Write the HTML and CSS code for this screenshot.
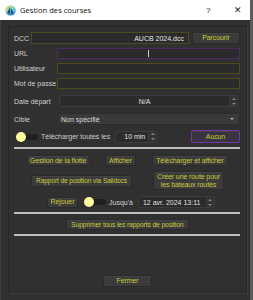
FILE: index.html
```html
<!DOCTYPE HTML><html>
<head>
  <title>Gestion des courses</title>
  <meta name="viewport" content="width=device-width, initial-scale=1">
  <link rel="stylesheet" href="styles.css">
</head>
<body>
<div class="window">
  <div class="titlebar">
    <svg class="appicon" width="11" height="11" viewBox="0 0 11 11">
      <defs>
        <linearGradient id="g" x1="0" y1="0" x2="1" y2="1">
          <stop offset="0" stop-color="#f4e04a"/>
          <stop offset="0.55" stop-color="#6fd0c8"/>
          <stop offset="1" stop-color="#2a9ad8"/>
        </linearGradient>
      </defs>
      <circle cx="5.5" cy="5.5" r="5.3" fill="url(#g)"/>
      <path d="M5 2 L5 8 L2.2 8 Z" fill="#1d3f9a"/>
      <path d="M5.8 3 L8.6 8 L5.8 8 Z" fill="#1d3f9a"/>
      <path d="M2 8.6 L9 8.6 L8 9.6 L3 9.6 Z" fill="#1d3f9a"/>
    </svg>
    <span class="wtitle">Gestion des courses</span>
    <span class="help">?</span>
    <span class="close">&#x2715;</span>
  </div>
  <div class="client">
    <div class="panel">
      <div class="row r-dcc">
        <span class="lbl">DCC</span>
        <div class="field dccfield">AUCB 2024.dcc</div>
        <div class="btn b-parcourir">Parcourir</div>
      </div>
      <div class="row r-url">
        <span class="lbl wide">URL</span>
        <div class="field focus"><span class="caret"></span></div>
      </div>
      <div class="row r-user">
        <span class="lbl wide">Utilisateur</span>
        <div class="field"></div>
      </div>
      <div class="row r-pass">
        <span class="lbl wide">Mot de passe</span>
        <div class="field"></div>
      </div>
      <div class="row r-date">
        <span class="lbl wide">Date départ</span>
        <div class="spin datespin"><span class="spintext center">N/A</span><span class="arrows"><i class="up"></i><i class="dn"></i></span></div>
      </div>
      <div class="row r-cible">
        <span class="lbl wide">Cible</span>
        <div class="combo"><span>Non spécifié</span><i class="drop"></i></div>
      </div>
      <div class="row r-dl">
        <div class="toggle"><span class="knob"></span></div>
        <span class="txt t-dl">Télécharger toutes les</span>
        <div class="spin minspin"><span class="spintext right">10 min</span><span class="arrows"><i class="up"></i><i class="dn"></i></span></div>
        <div class="btn b-aucun">Aucun</div>
      </div>
      <div class="sep s1"></div>
      <div class="row r-b1">
        <div class="btn b-flotte">Gestion de la flotte</div>
        <div class="btn b-afficher">Afficher</div>
        <div class="btn b-telaff">Télécharger et afficher</div>
      </div>
      <div class="row r-b2">
        <div class="btn b-rapport">Rapport de position via Saildocs</div>
        <div class="btn b-route">Créer une route pour<br>les bateaux routés</div>
      </div>
      <div class="row r-b3">
        <div class="btn b-rejouer">Rejouer</div>
        <div class="toggle t2"><span class="knob"></span></div>
        <span class="txt t-jusqu">Jusqu'à</span>
        <div class="spin endspin"><span class="spintext">12 avr. 2024 13:11</span><span class="arrows"><i class="up"></i><i class="dn"></i></span></div>
      </div>
      <div class="sep s2"></div>
      <div class="row r-supp">
        <div class="btn b-supp">Supprimer tous les rapports de position</div>
      </div>
      <div class="sep s3"></div>
      <div class="row r-fermer">
        <div class="btn b-fermer">Fermer</div>
      </div>
    </div>
  </div>
</div>
</body>
</html>
```

FILE: styles.css
```css
html {background: #5b5b5b;}
body {margin: 0; font-family: "Liberation Sans", Arial, sans-serif; font-size: 7px;}
.window {width: 250px; height: 300px; display: flex; flex-direction: column;}

.titlebar {height: 20px; background: #fff; display: flex; align-items: center; padding-left: 5px; box-sizing: border-box;}
.appicon {flex: none;}
.wtitle {font-size: 7.6px; color: #111; margin-left: 4px; flex: 1; font-family: "Open Sans", "Liberation Sans", sans-serif;}
.help {font-size: 8px; color: #222; width: 8px; margin-right: 20px;}
.close {font-size: 9px; color: #222; margin-right: 8px;}

.client {flex: 1; background: #303030; padding: 6px 3px 7px 7px; border-left: 1px solid #3e3e3e; display: flex;}
.panel {flex: 1; border: 1px solid #262626; box-shadow: 1px 1px 0 #3d3d3d; padding: 0 6px 0 5px; display: flex; flex-direction: column;}

.row {display: flex; align-items: center; white-space: nowrap;}
.lbl {color: #cfcfcf; width: 17px; flex: none;}
.lbl.wide {width: 43px;}
.txt {color: #cfcfcf;}

.field {flex: 1; height: 11px; box-sizing: border-box; border: 1px solid #4b4b1f; background: #2b2b2b; color: #e2e2e2; display: flex; align-items: center; padding: 0 4px;}
.dccfield {justify-content: flex-end; height: 12px;}
.field.focus {border-color: #4e2a5e; justify-content: center;}
.caret {width: 1px; height: 7px; background: #cfcfcf;}

.btn {box-sizing: border-box; background: #3b3b3b; border: 1px solid #2a2a2a; border-radius: 2px; color: #caca3c; display: flex; align-items: center; justify-content: center; text-align: center; line-height: 7.5px; box-shadow: inset 0 1px 0 #444; flex: none; letter-spacing: -0.1px;}

.r-dcc {margin-top: 5px;}
.b-parcourir {width: 48px; height: 12px; margin-left: 3px;}
.r-url {margin-top: 4px;}
.r-user {margin-top: 4px;}
.r-pass {margin-top: 4px;}
.r-date {margin-top: 6px;}
.r-cible {margin-top: 6px;}

.spin {box-sizing: border-box; height: 12px; background: #2b2b2b; border: 1px solid #3c3c3c; border-radius: 2px; display: flex; align-items: center; color: #e0e0e0;}
.spintext {flex: 1; padding: 0 4px;}
.spintext.center {text-align: center;}
.spintext.right {text-align: right; padding-right: 3px;}
.arrows {width: 7px; height: 10px; display: flex; flex-direction: column; align-items: center; justify-content: space-around; border-left: 1px solid #3a3a3a; background: #333;}
.arrows i {width: 0; height: 0; border-left: 2px solid transparent; border-right: 2px solid transparent;}
.arrows .up {border-bottom: 2px solid #8a8a8a;}
.arrows .dn {border-top: 2px solid #8a8a8a;}
.datespin {width: 179px; margin-left: 2px;}

.combo {flex: 1; margin-left: 1px; height: 12px; box-sizing: border-box; background: #3a3a3a; border: 1px solid #2c2c2c; border-radius: 2px; color: #dcdcdc; display: flex; align-items: center; padding: 0 3px 0 2px;}
.combo span {flex: 1;}
.drop {width: 0; height: 0; border-left: 2px solid transparent; border-right: 2px solid transparent; border-top: 2px solid #b0b0b0; margin-right: 2px;}

.r-dl {margin-top: 5px; height: 13px;}
.toggle {width: 18px; height: 6px; background: #1f1f1f; border-radius: 3px; position: relative; margin-left: 6px; flex: none;}
.knob {position: absolute; left: -4px; top: -2px; width: 10px; height: 10px; border-radius: 50%; background: #ffff9e;}
.t-dl {margin-left: 3px;}
.minspin {width: 42px; margin-left: 5px;}
.b-aucun {width: 49px; height: 13px; margin-left: auto; background: #393540; border: 1px solid #7636a6;}

.sep {height: 2px; background: #bdbdbd; flex: none;}
.s1 {margin-top: 4px;}

.r-b1 {margin-top: 6px; padding-left: 12px;}
.b-flotte {width: 64px; height: 11px;}
.b-afficher {width: 31px; height: 11px; margin-left: 15px;}
.b-telaff {width: 76px; height: 11px; margin-left: 16px;}

.r-b2 {margin-top: 5px; padding-left: 17px;}
.b-rapport {width: 101px; height: 12px; font-size: 6.6px;}
.b-route {width: 71px; height: 19px; margin-left: 21px; white-space: normal;}

.r-b3 {margin-top: 6px; padding-left: 33px;}
.b-rejouer {width: 31px; height: 11px;}
.t2 {margin-left: 10px;}
.t-jusqu {margin-left: 3px;}
.endspin {width: 77px; margin-left: 5px;}

.s2 {margin-top: 4px;}
.r-supp {margin-top: 5px; padding-left: 52px;}
.b-supp {width: 123px; height: 11px; font-size: 6.7px;}
.s3 {margin-top: 4px;}

.r-fermer {margin-top: auto; margin-bottom: 5px; padding-left: 89px;}
.b-fermer {width: 49px; height: 12px;}
```
